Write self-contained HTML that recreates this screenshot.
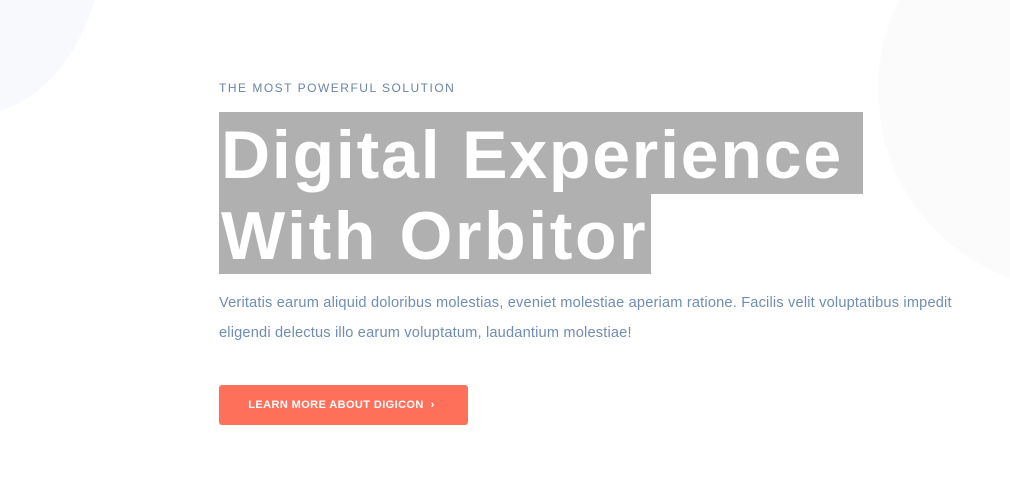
<!DOCTYPE html>
<html><head><style>
body{margin:0;width:1010px;height:482px;background:#fff;position:relative;overflow:hidden;font-family:"Liberation Sans",sans-serif}
.c1{position:absolute;left:-160px;top:-260px;width:265px;height:375px;border-radius:50%;background:#f8f9fc}
.c2{position:absolute;left:878px;top:-110px;width:400px;height:400px;border-radius:50%;background:#fbfbfc}
.sub{position:absolute;left:219px;top:81px;font-size:12px;letter-spacing:1.5px;color:#6a85a6}
.b1{position:absolute;left:219px;top:112px;width:644px;height:82px;background:#b0b0b0}
.b2{position:absolute;left:219px;top:194px;width:432px;height:80px;background:#b0b0b0}
.h{position:absolute;left:221px;font-size:68px;font-weight:bold;color:#fff;white-space:nowrap;line-height:80px}
p{position:absolute;left:219px;top:288px;margin:0;width:770px;font-size:14.6px;line-height:30px;color:#6f8db3;letter-spacing:0.18px}
.btn{position:absolute;left:219px;top:385px;width:249px;height:40px;background:#ff705a;border-radius:3px;color:#fff;font-size:11px;font-weight:bold;letter-spacing:0.4px;line-height:41px;text-align:center;box-sizing:border-box;padding-right:4px}
</style></head><body>
<div class="c1"></div><div class="c2"></div>
<div class="sub">THE MOST POWERFUL SOLUTION</div>
<div class="b1"></div><div class="b2"></div>
<div class="h" style="top:115px;letter-spacing:1.8px">Digital Experience</div>
<div class="h" style="top:196px;letter-spacing:2.6px">With Orbitor</div>
<p>Veritatis earum aliquid doloribus molestias, eveniet molestiae aperiam ratione. Facilis velit voluptatibus impedit eligendi delectus illo earum voluptatum, laudantium molestiae!</p>
<div class="btn">LEARN MORE ABOUT DIGICON &nbsp;›</div>
</body></html>
